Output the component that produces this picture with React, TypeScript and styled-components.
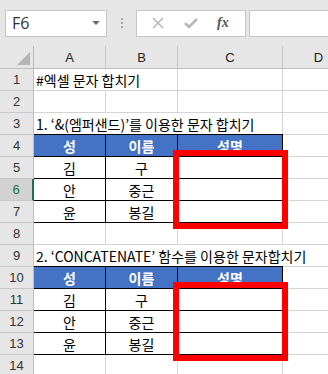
import styled, { createGlobalStyle } from "styled-components";

const GlobalStyle = createGlobalStyle`
  body {
    margin: 0;
    background: #ffffff;
    font-family: "Noto Sans CJK KR", "Noto Sans", sans-serif;
  }
`;

const Frame = styled.div`
  width: 328px;
  height: 374px;
  overflow: hidden;
  background: #e6e6e6;
`;

const Toolbar = styled.div`
  display: flex;
  align-items: center;
  height: 46px;
  padding-left: 5px;
  box-sizing: border-box;
`;

const NameBox = styled.div`
  display: flex;
  align-items: center;
  justify-content: space-between;
  width: 102px;
  height: 27px;
  box-sizing: border-box;
  padding: 0 6px 0 6px;
  background: #fff;
  border: 1px solid #c6c6c6;
  font-family: "Open Sans", "Liberation Sans", sans-serif;
  font-size: 16px;
  color: #333;
`;

const Caret = styled.span`
  width: 0;
  height: 0;
  border-left: 4px solid transparent;
  border-right: 4px solid transparent;
  border-top: 4px solid #707070;
`;

const Grip = styled.div`
  display: flex;
  flex-direction: column;
  gap: 2px;
  margin: 0 13px 0 14px;
  span {
    width: 2px;
    height: 2px;
    background: #a8a8a8;
  }
`;

const FormulaButtons = styled.div`
  display: flex;
  align-items: center;
  width: 110px;
  height: 27px;
  box-sizing: border-box;
  background: #fff;
  border: 1px solid #c6c6c6;
  padding-left: 14px;
  gap: 18px;
`;

const Fx = styled.span`
  font-family: "Liberation Serif", serif;
  font-style: italic;
  font-weight: bold;
  font-size: 14px;
  color: #555;
`;

const FormulaInput = styled.div`
  flex: 1;
  height: 27px;
  margin-left: 3px;
  box-sizing: border-box;
  background: #fff;
  border: 1px solid #c6c6c6;
  border-right: none;
`;

const Sheet = styled.div`
  position: relative;
  display: grid;
  grid-template-columns: 34px 72px 72px 105px 72px;
  grid-template-rows: 23px;
  grid-auto-rows: 22px;
  background: #fff;
`;

const Corner = styled.div`
  position: relative;
  background: #e6e6e6;
  border-right: 1px solid #bdbdbd;
  border-bottom: 1px solid #bdbdbd;
  &::after {
    content: "";
    position: absolute;
    right: 3px;
    bottom: 3px;
    border-left: 13px solid transparent;
    border-bottom: 13px solid #b4b4b4;
  }
`;

const ColHead = styled.div`
  display: flex;
  align-items: center;
  justify-content: center;
  background: #e6e6e6;
  border-right: 1px solid #c8c8c8;
  border-bottom: 1px solid #bdbdbd;
  font-family: "Liberation Sans", sans-serif;
  font-size: 13px;
  color: #222;
`;

const RowHead = styled.div<{ $active?: boolean }>`
  display: flex;
  align-items: center;
  justify-content: center;
  background: ${p => (p.$active ? "#d2d2d2" : "#e6e6e6")};
  border-right: ${p => (p.$active ? "2px solid #217346" : "1px solid #bdbdbd")};
  border-bottom: 1px solid #c8c8c8;
  font-family: "Liberation Sans", sans-serif;
  font-size: 13px;
  color: ${p => (p.$active ? "#217346" : "#333")};
`;

const Cell = styled.div<{ $span?: number; $table?: boolean }>`
  grid-column: span ${p => p.$span ?? 1};
  display: flex;
  align-items: center;
  justify-content: center;
  box-sizing: border-box;
  padding-top: 1px;
  border-right: 1px solid ${p => (p.$table ? "#000" : "#d4d4d4")};
  border-bottom: 1px solid ${p => (p.$table ? "#000" : "#d4d4d4")};
  font-size: 14px;
  color: #000;
  white-space: nowrap;
`;

const TitleCell = styled(Cell)`
  justify-content: flex-start;
  padding-left: 2px;
  border-bottom-color: #d4d4d4;
`;

const HeadCell = styled(Cell)`
  background: #4472c4;
  color: #fff;
  font-weight: bold;
  box-shadow: 0 -1px 0 #000;
`;

const Highlight = styled.div<{ $top: number }>`
  position: absolute;
  left: 173px;
  top: ${p => p.$top}px;
  width: 115px;
  height: 79px;
  box-sizing: border-box;
  border: 6px solid #ff0000;
  pointer-events: none;
`;

const people = [
  ["김", "구"],
  ["안", "중근"],
  ["윤", "봉길"],
];

const Blank = ({ n }: { n: number }) => (
  <>
    <RowHead $active={n === 6}>{n}</RowHead>
    <Cell />
    <Cell />
    <Cell />
    <Cell />
  </>
);

const Row = ({ n, last, first }: { n: number; last: string; first: string }) => (
  <>
    <RowHead $active={n === 6}>{n}</RowHead>
    <Cell $table>{last}</Cell>
    <Cell $table>{first}</Cell>
    <Cell $table />
    <Cell />
  </>
);

const Table = ({ start }: { start: number }) => (
  <>
    <RowHead>{start}</RowHead>
    <HeadCell $table>성</HeadCell>
    <HeadCell $table>이름</HeadCell>
    <HeadCell $table>성명</HeadCell>
    <Cell />
    {people.map(([last, first], i) => (
      <Row key={i} n={start + 1 + i} last={last} first={first} />
    ))}
  </>
);

const App = () => {
  return (
    <Frame>
      <GlobalStyle />
      <Toolbar>
        <NameBox>
          F6
          <Caret />
        </NameBox>
        <Grip>
          <span />
          <span />
          <span />
        </Grip>
        <FormulaButtons>
          <svg width="14" height="14" viewBox="0 0 14 14">
            <path d="M2 2 L12 12 M12 2 L2 12" stroke="#b8b8b8" strokeWidth="1.6" />
          </svg>
          <svg width="16" height="14" viewBox="0 0 16 14">
            <path d="M2 7 L6 11 L14 3" stroke="#b8b8b8" strokeWidth="2.6" fill="none" />
          </svg>
          <Fx>fx</Fx>
        </FormulaButtons>
        <FormulaInput />
      </Toolbar>
      <Sheet>
        <Corner />
        <ColHead>A</ColHead>
        <ColHead>B</ColHead>
        <ColHead>C</ColHead>
        <ColHead>D</ColHead>

        <RowHead>1</RowHead>
        <TitleCell $span={2}>#엑셀 문자 합치기</TitleCell>
        <Cell />
        <Cell />

        <Blank n={2} />

        <RowHead>3</RowHead>
        <TitleCell $span={3}>1. ‘&amp;(엠퍼샌드)’를 이용한 문자 합치기</TitleCell>
        <Cell />

        <Table start={4} />

        <Blank n={8} />

        <RowHead>9</RowHead>
        <TitleCell $span={4}>2. ‘CONCATENATE’ 함수를 이용한 문자합치기</TitleCell>

        <Table start={10} />

        <Blank n={14} />

        <Highlight $top={104} />
        <Highlight $top={236} />
      </Sheet>
    </Frame>
  );
};

export default App;
